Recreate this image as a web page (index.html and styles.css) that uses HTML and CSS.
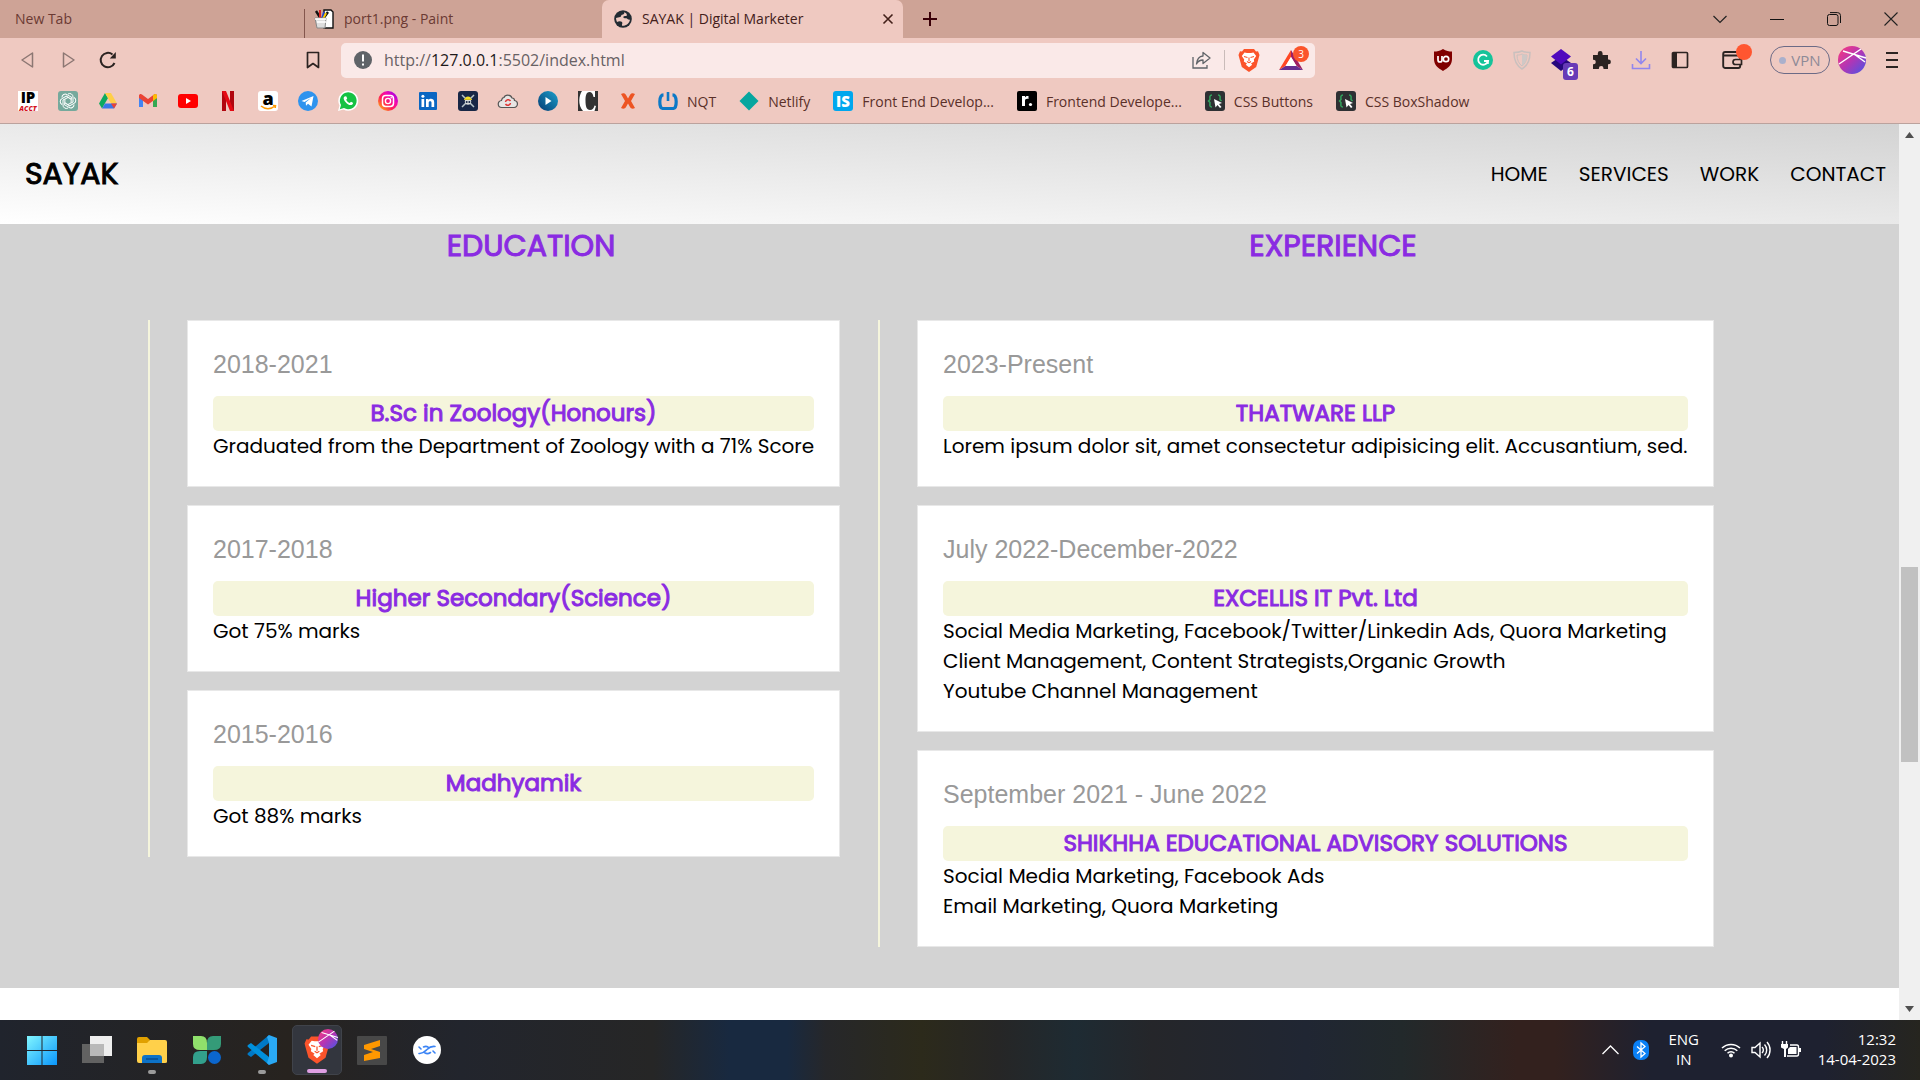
FILE: index.html
```html
<!DOCTYPE html>
<html lang="en">
<head>
<meta charset="utf-8">
<title>SAYAK | Digital Marketer</title>
<link rel="stylesheet" href="styles.css">
</head>
<body>
<div class="tabs">
  <div class="tab tab-first"><span>New Tab</span></div>
  <div class="tab tab-second">
    <svg width="20" height="20" viewBox="0 0 20 20"><path d="M10 1h7l2 2v16h-9z" fill="#fff" stroke="#111" stroke-width="1.4"/><path d="M2 2l5 8M14 3l-5 7" stroke="#111" stroke-width="2.4"/><path d="M6 1v8" stroke="#d22" stroke-width="2"/><path d="M10 3l-2 7" stroke="#24c" stroke-width="2"/><path d="M12 4l-3 6" stroke="#fc0" stroke-width="2"/><path d="M1 9h11l-1 10H3z" fill="#ddd" stroke="#888"/><path d="M1 10h11M3 13h9" stroke="#fff" stroke-width="1.5"/></svg>
    <span>port1.png - Paint</span>
  </div>
  <div class="tab tab-active">
    <svg width="18" height="18" viewBox="0 0 18 18"><circle cx="9" cy="9" r="8.8" fill="#222b33"/><path d="M10 2.2c1 1-.3 2.300-2 2.600-1 .2-.6 1.700-1.700 2.200L4 7.500 2 8c0 1.400.4 2.800 1 4 1.500-1 4-1 5 0 1 1.200-.4 2.400 0 3.800 4 .4 7.600-2.500 8-6.300-1.300.5-2.300-.2-3-.9-1-.9-3 .3-3.600-1-.4-1 .5-1.800 1.900-1.600 1 .2 1.800-.4 1.500-1.600C12.300 3 11.200 2.400 10 2.200z" fill="#efc9c1"/></svg>
    <span>SAYAK | Digital Marketer</span>
    <button class="plain tab-close" aria-label="Close tab"><svg width="12" height="12" viewBox="0 0 12 12"><path d="M1.500 1.500l9 9M10.500 1.500l-9 9" stroke="#43201a" stroke-width="1.600"/></svg></button>
  </div>
  <button class="plain new-tab" aria-label="New tab"><svg width="16" height="16" viewBox="0 0 16 16"><path d="M8 1v14M1 8h14" stroke="#3a0008" stroke-width="2"/></svg></button>
  <div class="window-controls">
    <button class="plain" aria-label="Search tabs"><svg width="14" height="14" viewBox="0 0 14 14"><path d="M.5 4L7 10.500 13.500 4" fill="none" stroke="#222" stroke-width="1.200"/></svg></button>
    <button class="plain" aria-label="Minimize"><svg width="14" height="14" viewBox="0 0 14 14"><path d="M0 7.500h14" stroke="#111"/></svg></button>
    <button class="plain" aria-label="Restore"><svg width="14" height="14" viewBox="0 0 14 14"><rect x=".5" y="2.500" width="10.500" height="11" rx="2" fill="none" stroke="#111"/><path d="M3 .6h7.500a3 3 0 0 1 3 3V11" fill="none" stroke="#111"/></svg></button>
    <button class="plain" aria-label="Close"><svg width="14" height="14" viewBox="0 0 14 14"><path d="M.5.5l13 13M13.500.5l-13 13" stroke="#222" stroke-width="1.100"/></svg></button>
  </div>
</div>
<div class="toolbar">
  <div class="nav-buttons">
    <button class="plain" aria-label="Back"><svg width="20" height="20" viewBox="0 0 20 20"><path d="M14.500 3v14L4 10z" fill="none" stroke="#8c7773" stroke-width="1.500" stroke-linejoin="round"/></svg></button>
    <button class="plain" aria-label="Forward"><svg width="20" height="20" viewBox="0 0 20 20"><path d="M5.500 3v14L16 10z" fill="none" stroke="#8c7773" stroke-width="1.500" stroke-linejoin="round"/></svg></button>
    <button class="plain" aria-label="Reload"><svg width="20" height="20" viewBox="0 0 20 20"><path d="M14.500 4.500A7.200 7.200 0 1 0 16.500 13" fill="none" stroke="#2b2321" stroke-width="2"/><path d="M17.800 2v6.500h-6z" fill="#2b2321"/></svg></button>
  </div>
  <button class="plain" aria-label="Bookmark this page"><svg width="20" height="20" viewBox="0 0 20 20"><path d="M4.500 2.500h11v15L10 13.500l-5.500 4z" fill="none" stroke="#2b2321" stroke-width="1.700" stroke-linejoin="round"/></svg></button>
  <div class="address">
    <svg width="18" height="18" viewBox="0 0 18 18"><circle cx="9" cy="9" r="9" fill="#5f6368"/><path d="M9 3.500v7M9 12.500v2" stroke="#fff" stroke-width="2"/></svg>
    <span class="url">http://<b>127.0.0.1</b>:5502/index.html</span>
    <svg width="20" height="20" viewBox="0 0 20 20"><path d="M2 7v11h14v-3" fill="none" stroke="#5f6368" stroke-width="1.300"/><path d="M12 2.500L19 8l-7 5.500V10c-3 0-5 1-6.500 4C6 9 8 6.300 12 6z" fill="none" stroke="#5f6368" stroke-width="1.300" stroke-linejoin="round"/></svg>
    <i class="divider"></i>
    <svg width="22" height="24" viewBox="0 0 22 24"><use href="#brave-lion"/></svg>
    <span class="reward"><svg width="24" height="20" viewBox="0 0 24 20"><path d="M12 0L0 20l6.500-4L12 7z" fill="#ff4724"/><path d="M12 0l12 20-6.500-4L12 7z" fill="#9e1f63"/><path d="M0 20h24l-6.500-4h-11z" fill="#662d91"/><path d="M12 7l5.500 9h-11z" fill="#fff"/></svg><em class="count">3</em></span>
  </div>
  <div class="extensions">
    <svg width="20" height="22" viewBox="0 0 20 22"><path d="M10 0c3 2 6 2.500 9 2.500V10c0 6-4 9-9 12-5-3-9-6-9-12V2.500C4 2.500 7 2 10 0z" fill="#800000"/><path d="M5 7v4a2 2 0 0 0 4 0V7" fill="none" stroke="#fff" stroke-width="1.700"/><circle cx="13" cy="10" r="2.700" fill="none" stroke="#fff" stroke-width="1.700"/></svg>
    <svg width="20" height="20" viewBox="0 0 20 20"><circle cx="10" cy="10" r="10" fill="#15c39a"/><path d="M14 6.500A5 5 0 1 0 15 11h-4" fill="none" stroke="#fff" stroke-width="1.800"/><path d="M15 10v4" stroke="#fff" stroke-width="1.500"/></svg>
    <svg width="18" height="20" viewBox="0 0 18 20"><path d="M9 1c3 1.500 5 1.500 8 1.500C17 11 14 16 9 19 4 16 1 11 1 2.500c3 0 5 0 8-1.500z" fill="none" stroke="#c9c0be" stroke-width="1.500"/><path d="M9 4c2 1 3 1 5 1 0 5-2 9-5 11C6 14 4 10 4 5c2 0 3 0 5-1z" fill="none" stroke="#c9c0be"/><path d="M9 4v12c3-2 5-6 5-11-2 0-3 0-5-1z" fill="#cfc8c6"/></svg>
    <span class="layers"><svg width="20" height="22" viewBox="0 0 20 22"><path d="M0 14l10-7 10 7-10 8z" fill="#26077c"/><path d="M0 7.500L10 0l10 7.500-10 8z" fill="#5009bd"/></svg><em class="six">6</em></span>
    <svg width="20" height="20" viewBox="0 0 20 20"><path d="M2 5h4.800V3.500a2.400 2.400 0 0 1 4.800 0V5H17v4.500h.5a2.400 2.400 0 0 1 0 4.800H17v4.700h-4.500v-.7a2.300 2.300 0 0 0-4.600 0v.7H2v-4.700h.5a2.300 2.300 0 0 0 0-4.600H2z" fill="#2b2321"/></svg>
    <svg width="20" height="20" viewBox="0 0 20 20"><path d="M10 1v12M5 8.500l5 5 5-5M1.500 14v4.500h17V14" fill="none" stroke="#9186ee" stroke-width="1.600"/></svg>
    <svg width="18" height="18" viewBox="0 0 18 18"><rect x="1.500" y="1.500" width="15" height="15" rx="1" fill="none" stroke="#2b2321" stroke-width="1.700"/><path d="M2 2h4v14H2z" fill="#2b2321"/></svg>
    <span class="wallet"><svg width="20" height="20" viewBox="0 0 20 20"><rect x="1.200" y="2" width="17" height="16" rx="2" fill="none" stroke="#2b2321" stroke-width="1.900"/><path d="M2 5.500h16" stroke="#2b2321" stroke-width="2"/><path d="M19.500 9.500h-6a2.500 2.500 0 0 0 0 5h6z" fill="#efc9c1" stroke="#2b2321" stroke-width="1.700"/></svg><i class="wallet-dot"></i></span>
    <button class="vpn"><i></i>VPN</button>
    <svg width="28" height="28" viewBox="0 0 28 28"><use href="#profile-ball"/></svg>
    <button class="plain" aria-label="Menu"><svg width="12" height="18" viewBox="0 0 12 18"><path d="M0 2h12M0 9h12M0 16h12" stroke="#2b2321" stroke-width="1.800"/></svg></button>
  </div>
</div>
<nav class="bookmarks" aria-label="Bookmarks">
  <a href="#"><svg width="20" height="20" viewBox="0 0 20 20"><path d="M0 0h20v20H0z" fill="#fff"/><text x="10" y="12" class="i-black" font-size="15" text-anchor="middle">IP</text><text x="10" y="19.500" class="i-red" font-size="7" text-anchor="middle">ACCT</text></svg></a>
  <a href="#"><svg width="20" height="20" viewBox="0 0 20 20"><rect width="20" height="20" rx="3" fill="#75a99c"/><g fill="none" stroke="#fff" stroke-width="1"><path id="petal" d="M10 3a3.300 3.300 0 0 1 5 3v5l-5 2.500"/><use href="#petal" transform="rotate(60 10 10)"/><use href="#petal" transform="rotate(120 10 10)"/><use href="#petal" transform="rotate(180 10 10)"/><use href="#petal" transform="rotate(240 10 10)"/><use href="#petal" transform="rotate(300 10 10)"/></g></svg></a>
  <a href="#"><svg width="20" height="20" viewBox="0 0 20 20"><path d="M7 2L1 12.500l3 5L10 7z" fill="#0da960"/><path d="M7 2h6l6 10.500h-6z" fill="#ffcf48"/><path d="M4 17.500l3-5h12l-3 5z" fill="#3977e8"/><path d="M13 12.500h6l-3 5z" fill="#ea4335"/></svg></a>
  <a href="#"><svg width="20" height="20" viewBox="0 0 20 20"><path d="M1 5v11h4V8z" fill="#4285f4"/><path d="M15 8v8h4V5z" fill="#34a853"/><path d="M1 7V4.500C1 3 3 2.500 4 3.500l6 4.500 6-4.500c1-1 3-.5 3 1V7l-9 6.500z" fill="#ea4335"/><path d="M15 4.300l1-.8c1-1 3-.5 3 1V7l-4 3z" fill="#fbbc04"/></svg></a>
  <a href="#"><svg width="20" height="20" viewBox="0 0 20 20"><rect y="3" width="20" height="14" rx="3" fill="#f00"/><path d="M8 7l5 3-5 3z" fill="#fff"/></svg></a>
  <a href="#"><svg width="20" height="20" viewBox="0 0 20 20"><path d="M4 0h4v20H4zM12 0h4v20h-4z" fill="#b1060f"/><path d="M4 0h4l8 20h-4z" fill="#e50914"/></svg></a>
  <a href="#"><svg width="20" height="20" viewBox="0 0 20 20"><rect width="20" height="20" rx="3" fill="#fff"/><text x="10" y="13.500" class="i-black" font-size="18" text-anchor="middle">a</text><path d="M3 15c4 3.500 10 3.500 14 0M15 14.500l2.500.2-.3 2.300" fill="none" stroke="#f90" stroke-width="1.500"/></svg></a>
  <a href="#"><svg width="20" height="20" viewBox="0 0 20 20"><circle cx="10" cy="10" r="10" fill="#2e93ee"/><path d="M3.500 10L15.500 5l-2 10.500-3.500-2.700-2 1.900-.3-3.200L13 7l-6.500 4z" fill="#fff"/></svg></a>
  <a href="#"><svg width="20" height="20" viewBox="0 0 20 20"><path d="M0 20l1.500-5.500A10 10 0 1 1 5.500 18.500z" fill="#fff"/><path d="M1.800 18.200L3 14a8.400 8.400 0 1 1 3 3z" fill="#15c243"/><path d="M7 5.200c-2 1-1.500 3.300.3 5.500 2.200 2.700 4.800 4.200 6.700 3 1.500-1 1-1.800.5-2.200l-1.500-.7-1.300 1.200c-1.600-.5-2.900-1.700-3.500-3.200l1-1.200-.8-2.100z" fill="#fff"/></svg></a>
  <a href="#"><svg width="20" height="20" viewBox="0 0 20 20"><defs><linearGradient id="insta" x1="0" y1="1" x2="1" y2="0"><stop stop-color="#ffd200"/><stop offset=".4" stop-color="#ff1f57"/><stop offset=".65" stop-color="#f408b0"/><stop offset="1" stop-color="#7a00ff"/></linearGradient></defs><circle cx="10" cy="10" r="10" fill="url(#insta)"/><rect x="4.500" y="4.500" width="11" height="11" rx="3.200" fill="none" stroke="#fff" stroke-width="1.500"/><circle cx="10" cy="10" r="2.600" fill="none" stroke="#fff" stroke-width="1.400"/><circle cx="13.200" cy="6.800" r=".8" fill="#fff"/></svg></a>
  <a href="#"><svg width="20" height="20" viewBox="0 0 20 20"><rect x="1" y="1" width="18" height="18" rx="1" fill="#0a66c2"/><path d="M3.500 8h2.700v8H3.500zM8 8h2.500v1.200c1.300-2.200 5.700-1.800 5.700 2V16h-2.700v-4.200c0-2-2.800-1.800-2.800 0V16H8z" fill="#fff"/><circle cx="4.900" cy="5.300" r="1.500" fill="#fff"/></svg></a>
  <a href="#"><svg width="20" height="20" viewBox="0 0 20 20"><rect width="20" height="20" rx="3" fill="#182746"/><path d="M4 4l12 12M16 4L4 16" stroke="#b8c5c9" stroke-width="1.500"/><circle cx="10" cy="10.500" r="3.200" fill="#d7dcda"/><path d="M7 8.500a3 3 0 0 1 6 0z" fill="#f4df26"/><path d="M6 8.500h8" stroke="#d6be22"/><circle cx="8.700" cy="11" r="1" fill="#182746"/><circle cx="11.300" cy="11" r="1" fill="#182746"/></svg></a>
  <a href="#"><svg width="20" height="20" viewBox="0 0 20 20"><path d="M4 16.500a3.500 3.500 0 0 1-.5-7C4 7 5.500 6.500 6 6.500c1-3 6.500-3.500 8 .5 2 0 2.500 1.500 2.500 2.500 4 .5 4 6.500-.5 7z" fill="#e8e5e4" stroke="#555" stroke-width="1.200"/><path d="M7.500 11a2.700 2.700 0 0 1 5-1M12.500 12a2.700 2.700 0 0 1-5 1" fill="none" stroke="#d33" stroke-width="1.500"/></svg></a>
  <a href="#"><svg width="20" height="20" viewBox="0 0 20 20"><defs><linearGradient id="play" x1="0" y1="1" x2="1" y2="0"><stop stop-color="#063b72"/><stop offset="1" stop-color="#1ca0cc"/></linearGradient></defs><circle cx="10" cy="10" r="10" fill="url(#play)"/><path d="M7.500 6l6 4-6 4z" fill="#fff"/></svg></a>
  <a href="#"><svg width="20" height="20" viewBox="0 0 20 20"><path d="M0 0h20v20H0z" fill="#333"/><path d="M4 0h13v6h-1.500C15 2.500 13.500 1 11.500 1 8 1 7.500 5 7.500 10s1 9 4.500 9c2.500 0 4-2 4.500-4.500L18 15l-1.500 5H5C-.5 14 1 4 4 0z" fill="#fff"/></svg></a>
  <a href="#"><svg width="20" height="20" viewBox="0 0 20 20"><path d="M3 3c2-1 4-1 5 1l2 3.500L12 4c1-2 3-2 5-1l-4 7 4 7c-2 1-4 1-5-1l-2-3.500L8 16c-1 2-3 2-5 1l4-7z" fill="#ed5423"/></svg></a>
  <a class="labeled" href="#"><svg width="20" height="20" viewBox="0 0 20 20"><path d="M5.500 3.800C.5 4 1 17 4.500 17.500h11C19 17 19.500 4 14.500 3.800" fill="none" stroke="#0c79c7" stroke-width="3.200"/><path d="M10 1v9" stroke="#0c79c7" stroke-width="2.600"/></svg>NQT</a>
  <a class="labeled" href="#"><svg width="20" height="20" viewBox="0 0 20 20"><path d="M10 .5l9.500 9.500-9.500 9.500L.5 10z" fill="#06a69f"/></svg>Netlify</a>
  <a class="labeled" href="#"><svg width="20" height="20" viewBox="0 0 20 20"><rect width="20" height="20" rx="3" fill="#00a7ee"/><text x="10" y="15.500" class="i-white" font-size="15" text-anchor="middle">IS</text></svg>Front End Develop...</a>
  <a class="labeled" href="#"><svg width="20" height="20" viewBox="0 0 20 20"><rect width="20" height="20" rx="2"/><path d="M5 5h3v1.500C9 5 10 4.700 11.500 5v3C9 7.500 8 8.500 8 10v5H5z" fill="#fff"/><circle cx="13.500" cy="13.500" r="1.600" fill="#fff"/></svg>Frontend Develope...</a>
  <a class="labeled" href="#"><svg width="20" height="20" viewBox="0 0 20 20"><use href="#css-cursor"/></svg>CSS Buttons</a>
  <a class="labeled" href="#"><svg width="20" height="20" viewBox="0 0 20 20"><use href="#css-cursor"/></svg>CSS BoxShadow</a>
</nav>
<div class="viewport">
  <div class="page">
    <header class="site-header">
      <a class="logo" href="#">SAYAK</a>
      <nav class="menu" aria-label="Main"><a href="#">HOME</a><a href="#">SERVICES</a><a href="#">WORK</a><a href="#">CONTACT</a></nav>
    </header>
    <main class="resume">
      <section class="column">
        <h2>EDUCATION</h2>
        <div class="timeline">
          <article class="card"><p class="date">2018-2021</p><h3>B.Sc in Zoology(Honours)</h3><p>Graduated from the Department of Zoology with a 71% Score</p></article>
          <article class="card"><p class="date">2017-2018</p><h3>Higher Secondary(Science)</h3><p>Got 75% marks</p></article>
          <article class="card"><p class="date">2015-2016</p><h3>Madhyamik</h3><p>Got 88% marks</p></article>
        </div>
      </section>
      <section class="column">
        <h2>EXPERIENCE</h2>
        <div class="timeline">
          <article class="card"><p class="date">2023-Present</p><h3>THATWARE LLP</h3><p>Lorem ipsum dolor sit, amet consectetur adipisicing elit. Accusantium, sed.</p></article>
          <article class="card"><p class="date">July 2022-December-2022</p><h3>EXCELLIS IT Pvt. Ltd</h3><p>Social Media Marketing, Facebook/Twitter/Linkedin Ads, Quora Marketing<br>Client Management, Content Strategists,Organic Growth<br>Youtube Channel Management</p></article>
          <article class="card"><p class="date">September 2021 - June 2022</p><h3>SHIKHHA EDUCATIONAL ADVISORY SOLUTIONS</h3><p>Social Media Marketing, Facebook Ads<br>Email Marketing, Quora Marketing</p></article>
        </div>
      </section>
    </main>
  </div>
  <div class="scrollbar" aria-hidden="true">
    <svg width="9" height="6" viewBox="0 0 9 6"><path d="M4.500 0L9 6H0z" fill="#505050"/></svg>
    <div class="track"><i class="track-before"></i><i class="thumb"></i><i class="track-after"></i></div>
    <svg width="9" height="6" viewBox="0 0 9 6"><path d="M0 0h9L4.500 6z" fill="#505050"/></svg>
  </div>
</div>
<footer class="taskbar">
  <div class="apps">
    <button class="plain app" aria-label="Start"><svg width="30" height="30" viewBox="0 0 30 30"><defs><linearGradient id="win" x1="0" y1="0" x2="1" y2="1"><stop stop-color="#81f6ff"/><stop offset="1" stop-color="#0a96fb"/></linearGradient></defs><path d="M0 1h14.500v14H0zM15.500 1H30v14H15.500zM0 16h14.500v14H0zM15.500 16H30v14H15.500z" fill="url(#win)"/></svg></button>
    <button class="plain app" aria-label="Task view"><svg width="30" height="30" viewBox="0 0 30 30"><path d="M0 9h22v19H0z" fill="#626262"/><path d="M8 1h22v20H8z" fill="#eee"/><path d="M8 9h14v12H8z" fill="#b9b9b9"/></svg></button>
    <button class="plain app running" aria-label="File Explorer"><svg width="30" height="30" viewBox="0 0 30 30"><path d="M0 4q0-2 2-2h8l3 3-2 5H0z" fill="#e0a000"/><path d="M0 8h10l3-3h15q2 0 2 2v20q0 1-2 1H2q-2 0-2-2z" fill="#ffd04a"/><path d="M5 28v-5q0-3 3-3h14q3 0 3 3v5z" fill="#0d72c7"/><path d="M9 24h12" stroke="#064c91" stroke-width="1.500"/></svg></button>
    <button class="plain app" aria-label="Clover"><svg width="30" height="30" viewBox="0 0 30 30"><path d="M1 1h8q6 0 6 7v7H8q-7 0-7-6z" fill="#8fe06b"/><path d="M29 1h-8q-6 0-6 7v7h7q7 0 7-6z" fill="#349b78"/><path d="M1 29h8q6 0 6-7v-6H8q-7 0-7 6z" fill="#32a08c"/><circle cx="22.500" cy="22.500" r="6.500" fill="#0b66cd"/></svg></button>
    <button class="plain app running" aria-label="Code editor"><svg width="30" height="30" viewBox="0 0 30 30"><path d="M22 0v8L4 22l-3-2q-1-1 0-2z" fill="#0079c6"/><path d="M4 8l18 14v8L1 12q-1-1 0-2z" fill="#0090dc"/><path d="M22 0l8 3v24l-8 3-2-2 2-6V8l-2-6z" fill="#2aa9f4"/></svg></button>
    <button class="plain app current" aria-label="Browser"><svg width="42" height="42" viewBox="0 0 42 42"><svg y="6" x="8" width="26" height="29" viewBox="0 0 22 24"><use href="#brave-lion"/></svg><svg x="22" y="0" width="20" height="20" viewBox="0 0 28 28"><use href="#profile-ball"/></svg></svg></button>
    <button class="plain app" aria-label="Text editor"><svg width="30" height="30" viewBox="0 0 30 30"><rect y="1" width="30" height="29" rx="1" fill="#484848"/><path d="M7 10l16-5v6l-9 3 9 3v6L7 26v-6l9-3-9-3z" fill="#ff9800"/></svg></button>
    <button class="plain app" aria-label="DNA app"><svg width="30" height="30" viewBox="0 0 30 30"><circle cx="15" cy="15" r="14" fill="#fff"/><path d="M7 18.500c4 .5 5.500-1.500 8-4s4-3.500 8-3M7 12l2 2M21 16l2 2M11.500 12c2.500-1.300 4.500-.3 5.500 1M13 18c2 1 4 .5 5.500-.5" fill="none" stroke="#3b84f5" stroke-width="1.600" stroke-linecap="round"/></svg></button>
  </div>
  <div class="tray">
    <svg class="chevron" width="17" height="10" viewBox="0 0 17 10"><path d="M.5 9l8-8 8 8" fill="none" stroke="#fff" stroke-width="1.300"/></svg>
    <svg width="16" height="20" viewBox="0 0 16 20"><rect width="16" height="20" rx="7" fill="#0a80f5"/><path d="M4 6.500l8 7L8 17V3l4 3.500-8 7" fill="none" stroke="#fff" stroke-width="1.300"/></svg>
    <div class="lang">ENG<br>IN</div>
    <svg width="20" height="16" viewBox="0 0 20 16"><path d="M1 6a13 13 0 0 1 18 0M3.700 8.700a9 9 0 0 1 12.600 0M6.500 11.300a5 5 0 0 1 7 0" fill="none" stroke="#fff" stroke-width="1.500"/><circle cx="10" cy="13.500" r="2" fill="#fff"/></svg>
    <svg width="20" height="18" viewBox="0 0 20 18"><path d="M1 6.500h3L9 2v14l-5-4.500H1z" fill="none" stroke="#fff" stroke-width="1.400"/><path d="M11 6a4 4 0 0 1 0 6M13.500 3.500a8 8 0 0 1 0 11M16 1a12 12 0 0 1 0 16" fill="none" stroke="#fff" stroke-width="1.400"/></svg>
    <svg width="20" height="18" viewBox="0 0 20 18"><path d="M1.500 0v3M5.500 0v3" stroke="#fff" stroke-width="1.400"/><path d="M0 3h7v3.500L5 8v8H3V8L0 6.500z" fill="#fff"/><path d="M9 4h7q1.500 0 1.500 2v7q0 2-1.500 2H6" fill="none" stroke="#fff" stroke-width="1.400"/><path d="M9 6h6.500v7H7V8zM18 7h2v4h-2z" fill="#fff"/></svg>
    <div class="clock">12:32<br>14-04-2023</div>
  </div>
</footer>
<svg class="symbols" width="0" height="0" aria-hidden="true"><defs>
  <linearGradient id="ball" x1="0" y1="0" x2="1" y2="1"><stop stop-color="#ff3a7a"/><stop offset=".5" stop-color="#b335b4"/><stop offset="1" stop-color="#4457e8"/></linearGradient>
  <g id="profile-ball"><circle cx="14" cy="14" r="14" fill="url(#ball)"/><path d="M1 18L23 3M5 5l23 7M16 8l11 8" stroke="#fff" stroke-width="1.500"/></g>
  <g id="brave-lion"><path d="M6 1h10l2 2.500 2-.2L21.500 7l-.8 3-2.500 9L11 24l-7.200-5L1.300 10 .5 7 2 3.300l2 .2z" fill="#fb542b"/><path d="M6.500 4.500l2.500.5h4l2.500-.5L18.200 8l-2.400 3.500.4 2-3.200 2 1.200 1.200-3.200 2.600-3.200-2.600L9 15.500l-3.200-2 .4-2L3.800 8z" fill="#fff"/><path d="M6 8.500l3.500 1M16 8.500l-3.500 1M11 9.500v3.500M9 13.500l2 1.200 2-1.200" fill="none" stroke="#fb542b" stroke-width="1.100"/></g>
  <g id="css-cursor"><rect width="20" height="20" rx="3" fill="#2e3033"/><path d="M7 4C4 4 5 7 5 8.500L3.500 10 5 11.500c0 2-1 4.500 2 4.500M13 4c3 0 2 3 2 4.500l1.500 1.500" fill="none" stroke="#33a35d" stroke-width="1.500"/><path d="M9 8l8 4-3 1 2.500 3-1.500 1-2.500-3-2 2.500z" fill="#fff"/></g>
</defs></svg>
</body>
</html>
```
FILE: styles.css
```css
* { box-sizing: border-box; margin: 0; padding: 0; }
html, body { height: 100%; }
body { display: flex; flex-direction: column; font-family: "Open Sans", "Noto Sans", sans-serif; font-size: 14px; overflow: hidden; background: #fff; }
a { color: inherit; text-decoration: none; }
svg { display: block; flex: none; overflow: visible; }
i, em { font-style: normal; }
.plain { border: 0; background: none; font: inherit; color: inherit; display: flex; align-items: center; justify-content: center; flex: none; }
.symbols { position: absolute; }

.tabs { display: flex; align-items: center; height: 38px; flex: none; background: #cea396; color: #6b3a33; }
.tab { display: flex; align-items: center; gap: 10px; height: 38px; padding-bottom: 1px; white-space: nowrap; }
.tab-first { width: 304px; padding-left: 15px; }
.tab-second { width: 298px; height: 29px; align-self: flex-end; padding: 0 0 10px 9px; border-left: 1px solid #84564d; }
.tab-active { width: 301px; padding: 0 9px 1px 12px; background: #efc9c1; border-radius: 7px 7px 0 0; color: #43201a; }
.tab-close { margin-left: auto; }
.new-tab { margin-left: 19px; }
.window-controls { display: flex; gap: 43px; margin-left: auto; padding-right: 22px; }

.toolbar { display: flex; align-items: center; height: 44px; flex: none; padding: 0 22px 0 18px; background: #efc9c1; }
.nav-buttons { display: flex; gap: 20px; margin-right: 185px; }
.address { display: flex; align-items: center; flex: 1; height: 35px; margin: 0 118px 0 18px; padding: 0 12px 0 13px; border-radius: 5px; background: #fae9e8; }
.url { flex: 1; margin-left: 12px; font-size: 16px; color: #686164; }
.url b { font-weight: 400; color: #1e1a1a; }
.divider { width: 1px; height: 20px; margin: 0 13px; background: #c9bbb9; }
.reward { position: relative; margin-left: 19px; }
.count { position: absolute; right: -6px; top: -4px; width: 16px; height: 16px; border-radius: 8px; background: #fb542b; color: #fff; font-size: 10px; line-height: 16px; text-align: center; }
.extensions { display: flex; align-items: center; gap: 20px; }
.layers, .wallet { position: relative; }
.wallet { margin: 0 8px 0 13px; }
.six { position: absolute; left: 12px; top: 14px; width: 15px; height: 17px; border-radius: 3px; background: #673ab7; color: #fff; font-size: 12px; font-weight: 700; line-height: 17px; text-align: center; }
.wallet-dot { position: absolute; right: -10px; top: -6px; width: 16px; height: 16px; border-radius: 8px; background: #ff5630; }
.vpn { display: flex; align-items: center; justify-content: center; gap: 5px; width: 60px; height: 28px; margin-right: -12px; border: 1px solid #6b6a86; border-radius: 14px; background: none; color: #8e8a97; font: 15px "Open Sans", sans-serif; }
.vpn i { width: 7px; height: 7px; border-radius: 4px; background: #aab0cc; }

.bookmarks { display: flex; align-items: center; gap: 20px; height: 42px; flex: none; padding: 0 0 3px 18px; border-bottom: 1px solid #bba29d; background: #efc9c1; color: #5a3029; white-space: nowrap; }
.bookmarks a { display: flex; align-items: center; gap: 9px; }
.bookmarks .labeled { padding-right: 3px; }
.i-black, .i-red, .i-white { font-family: "Open Sans", sans-serif; font-weight: 800; }
.i-red { fill: #d4101c; font-style: italic; }
.i-white { fill: #fff; }

.viewport { display: flex; flex: 1; min-height: 0; }
.page { flex: 1; min-width: 0; overflow: hidden; background: #fff; font-family: Poppins, Inter, sans-serif; color: #000; }
.site-header { display: flex; align-items: center; justify-content: space-between; height: 100px; padding: 0 13px 0 25px; background: linear-gradient(to top right, #fff, #d3d3d3); }
.logo, h2, h3 { font-weight: 400; -webkit-text-stroke: 1px currentColor; }
.logo { font-size: 30px; }
.menu { display: flex; gap: 31px; font-size: 20px; }
.resume { display: grid; grid-template-columns: 692fr 836fr; gap: 38px; padding: 0 185px 41px 148px; background: #d3d3d3; }
.column { min-width: 0; }
h2 { padding-left: 74px; margin-bottom: 53px; color: #8a2be2; font-size: 30px; line-height: 43px; text-align: center; }
.timeline { display: flex; flex-direction: column; gap: 18px; padding-left: 37px; border-left: 2px solid #f5f5dc; }
.card { padding: 25px; border: 1px solid #e8e8e8; background: #fff; font-size: 20px; line-height: 30px; white-space: nowrap; }
.date { margin: 3px 0 17px; color: #999; font-family: "Liberation Sans", Arial, sans-serif; font-size: 25px; }
h3 { border-radius: 5px; background: #f5f5dc; color: #8a2be2; font-size: 23px; line-height: 35px; text-align: center; }

.scrollbar { display: flex; flex-direction: column; align-items: center; width: 21px; padding: 8px 0; background: #f0f0f0; }
.track { display: flex; flex-direction: column; flex: 1; width: 17px; }
.track-before { flex: 429; }
.thumb { flex: 195; background: #c1c1c1; }
.track-after { flex: 244; }

.taskbar { display: flex; justify-content: space-between; align-items: center; height: 60px; flex: none; padding: 0 24px 0 17px; background: linear-gradient(90deg, #20242d, #27231f 15%, #22252d 24%, #262626 34%, #182940 38%, #182940 41%, #26272a 43%, #2c2a1b 48%, #262626 52%, #1e2b33 56%, #25262a 60%, #202633 68%, #22292b 73%, #33211e 79%, #33211e 81%, #1e2130 86%, #1e2130 95%, #26251f); color: #fff; }
.apps { display: flex; gap: 5px; }
.app { position: relative; width: 50px; height: 50px; border-radius: 5px; }
.current { background: #33363e; border: 1px solid #40434a; }
.running::after, .current::after { content: ""; position: absolute; bottom: 1px; left: 50%; width: 8px; height: 4px; margin-left: -4px; border-radius: 2px; background: #9b9b9b; }
.current::after { width: 20px; margin-left: -10px; background: #df9fe3; }
.tray { display: flex; align-items: center; gap: 10px; font-size: 15px; line-height: 20px; }
.chevron { margin-right: 4px; }
.lang { width: 48px; margin: 0 3px 0 1px; text-align: center; }
.lang, .clock { padding-bottom: 2px; }
.clock { margin-left: 7px; text-align: right; }
```
